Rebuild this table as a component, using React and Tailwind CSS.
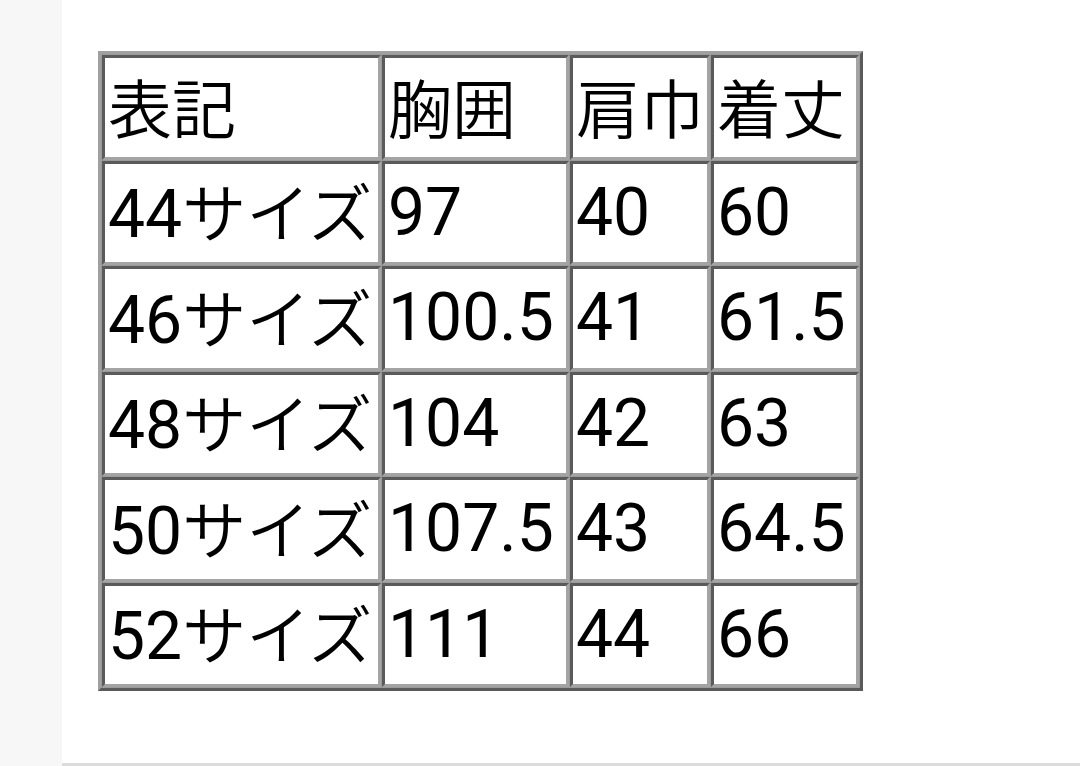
import React from "react";

const rows = [
  ["表記", "胸囲", "肩巾", "着丈"],
  ["44サイズ", "97", "40", "60"],
  ["46サイズ", "100.5", "41", "61.5"],
  ["48サイズ", "104", "42", "63"],
  ["50サイズ", "107.5", "43", "64.5"],
  ["52サイズ", "111", "44", "66"],
];

const widths = ["w-[279px]", "w-[187px]", "w-[139px]", "w-[148px]"];

function Runs({ text }) {
  const parts = text.match(/[\x00-\x7f]+|[^\x00-\x7f]+/g) || [];
  return parts.map((p, i) =>
    /^[\x00-\x7f]+$/.test(p) ? (
      <span key={i} className="text-[66px] font-normal leading-none" style={{ fontFamily: "Roboto, sans-serif" }}>
        {p}
      </span>
    ) : (
      <span key={i} className="text-[64px] font-[350] leading-none" style={{ fontFamily: '"Noto Sans CJK JP", sans-serif' }}>
        {p}
      </span>
    )
  );
}

export default function App() {
  return (
    <div className="flex h-[766px] w-[1080px] overflow-hidden bg-white">
      <div className="w-[62px] shrink-0 bg-[#f7f7f7]" />
      <div className="flex flex-1 flex-col">
        <div className="flex-1 pl-[36px] pt-[51px]">
          <table
            className="table-fixed border-separate border-spacing-[1px] border-[3px] border-t-[#a0a0a0] border-l-[#a0a0a0] border-r-[#5a5a5a] border-b-[#5a5a5a] bg-[#9a9a9a] text-black"
            style={{ fontFamily: 'Roboto, "Noto Sans CJK JP", sans-serif' }}
          >
            <tbody>
              {rows.map((r, i) => (
                <tr key={i}>
                  {r.map((c, j) => (
                    <td
                      key={j}
                      className={`${widths[j]} h-[104.5px] whitespace-nowrap border-[3px] border-t-[#5a5a5a] border-l-[#5a5a5a] border-r-[#a4a4a4] border-b-[#a4a4a4] bg-white px-[3px] py-0 text-left align-middle text-[64px] leading-[60px]`}
                    >
                      <Runs text={c} />
                    </td>
                  ))}
                </tr>
              ))}
            </tbody>
          </table>
        </div>
        <div className="h-[3px] bg-[#dcdcdc]" />
      </div>
    </div>
  );
}
